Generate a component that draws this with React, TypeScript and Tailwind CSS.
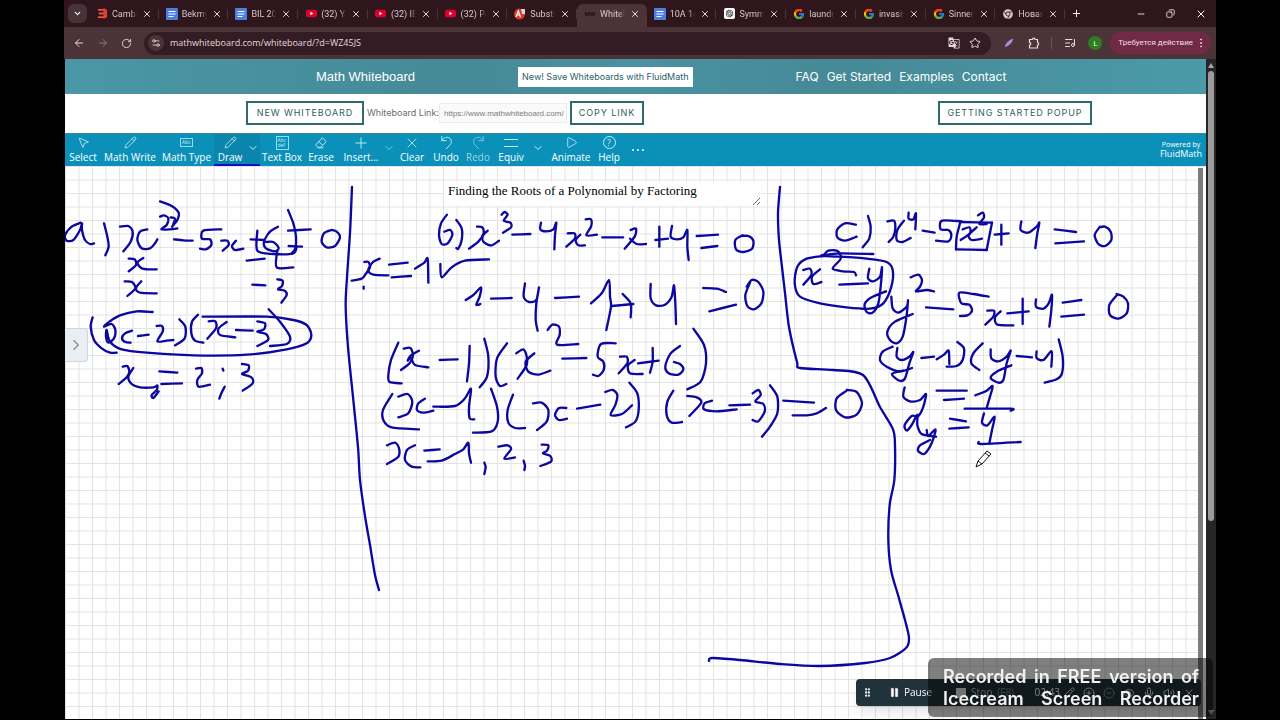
import type { ReactNode } from 'react';
import {
  ArrowLeft,
  ArrowRight,
  ChevronDown,
  ChevronRight,
  CirclePlus,
  CircleMinus,
  Copy,
  EllipsisVertical,
  Eye,
  GripVertical,
  ListMusic,
  Mic,
  Minus,
  MousePointer2,
  Pause,
  Pencil,
  Play,
  Plus,
  Puzzle,
  RotateCw,
  Settings2,
  Star,
  Volume2,
  X,
} from 'lucide-react';
import { FcGoogle } from 'react-icons/fc';
import { FaChrome } from 'react-icons/fa';
import { RiOpenaiFill } from 'react-icons/ri';
import { MdGTranslate } from 'react-icons/md';

const CambridgeIcon = () => (
  <svg viewBox="0 0 12 12" className="w-[11px] h-[11px]">
    <path d="M1 1h7v2H1zM2 5h6v2H2zM1 9h7v2H1z" fill="#f0503c" />
    <path d="M7 0l4 2v8l-4 2z" fill="#d8432f" />
  </svg>
);

const DocsIcon = () => (
  <svg viewBox="0 0 12 12" className="w-3 h-3">
    <rect width="12" height="12" rx="1" fill="#4a7fe0" />
    <path d="M2.5 3.5h7M2.5 6h7M2.5 8.5h5" stroke="#fff" strokeWidth="1.2" />
  </svg>
);

const YoutubeIcon = () => (
  <svg viewBox="0 0 12 12" className="w-[11px] h-[11px]">
    <rect y="2" width="12" height="8" rx="2" fill="#e0002d" />
    <path d="M4.8 4.2v3.6L8 6z" fill="#fff" />
  </svg>
);

const SubstIcon = () => (
  <svg viewBox="0 0 12 12" className="w-3 h-3">
    <circle cx="5.5" cy="6" r="5.5" fill="#d93a25" />
    <path d="M2 9l2.3-6 2.2 6M3 7h2.700" stroke="#fff" strokeWidth="1.2" fill="none" />
    <path d="M7 1h4v5H8z" fill="#d8d4d0" />
  </svg>
);

const ChatIcon = () => (
  <span className="w-[11px] h-[11px] rounded-xs bg-white flex items-center justify-center">
    <RiOpenaiFill size={9} className="text-black" />
  </span>
);

const tabs: { title: string; icon: ReactNode; active?: boolean }[] = [
  { title: 'Cambridge', icon: <CambridgeIcon /> },
  { title: 'Bekmyrza', icon: <DocsIcon /> },
  { title: 'BIL 2025', icon: <DocsIcon /> },
  { title: '(32) You', icon: <YoutubeIcon /> },
  { title: '(32) IELTS', icon: <YoutubeIcon /> },
  { title: '(32) Poly', icon: <YoutubeIcon /> },
  { title: 'Substitute', icon: <SubstIcon /> },
  { title: 'Whiteboard', icon: <span className="text-[6px] font-bold text-[#1d1013]">MW</span>, active: true },
  { title: '10A 14', icon: <DocsIcon /> },
  { title: 'Symmetry', icon: <ChatIcon /> },
  { title: 'laundry', icon: <FcGoogle size={12} /> },
  { title: 'invasive', icon: <FcGoogle size={12} /> },
  { title: 'Sinners', icon: <FcGoogle size={12} /> },
  { title: 'Новая вкладка', icon: <FaChrome size={10} /> },
];

const TabStrip = () => (
  <div className="flex items-center h-[27px] bg-[#2e161c] text-[#d6c8cb] font-[Roboto,sans-serif]">
    <button aria-label="Search tabs" className="ml-1 w-[19px] h-[19px] rounded-md bg-[#48333a] flex items-center justify-center text-white">
      <ChevronDown size={9} strokeWidth={3} />
    </button>
    <div className="ml-[2px] w-[976px] h-full flex items-end">
      {tabs.map((tab, index) => (
        <div
          key={index}
          className={`flex-1 min-w-0 h-[23px] pl-[7px] pb-1 flex items-center rounded-t-md ${tab.active ? 'bg-[#4c3338]' : ''}`}
        >
          <span className="w-3 flex justify-center shrink-0">{tab.icon}</span>
          <span className="ml-1 w-[25px] overflow-hidden whitespace-nowrap text-[9px] leading-4 [mask-image:linear-gradient(to_right,black_75%,transparent)]">
            {tab.title}
          </span>
          <button aria-label={`Close ${tab.title}`} className="ml-[5px] text-white">
            <X size={10} strokeWidth={2} />
          </button>
          {!tab.active && <span className="ml-auto w-px h-[10px] bg-[#4c3338]" />}
        </div>
      ))}
    </div>
    <button aria-label="New tab" className="ml-[6px] text-white"><Plus size={11} /></button>
    <div className="ml-auto mr-[9px] flex items-center gap-5 text-white">
      <button aria-label="Minimize"><Minus size={10} /></button>
      <button aria-label="Restore"><Copy size={9} className="-scale-x-100" /></button>
      <button aria-label="Close window"><X size={12} /></button>
    </div>
  </div>
);

const AddressBar = () => (
  <div className="flex items-center h-[32px] px-[9px] bg-[#4c3338] text-[#e6dadc]">
    <button aria-label="Back"><ArrowLeft size={12} /></button>
    <button aria-label="Forward" className="ml-3 text-[#8d777c]"><ArrowRight size={12} /></button>
    <button aria-label="Reload" className="ml-3"><RotateCw size={11} /></button>
    <div className="ml-3 flex-1 h-[23px] rounded-full bg-[#331c23] flex items-center pl-1 pr-[10px]">
      <span className="w-4 h-4 rounded-full bg-[#4c3338] flex items-center justify-center">
        <Settings2 size={10} />
      </span>
      <input
        aria-label="Address"
        defaultValue="mathwhiteboard.com/whiteboard/?d=WZ45JS"
        className="ml-[6px] flex-1 bg-transparent text-[9px] outline-none"
      />
      <MdGTranslate size={12} />
      <Star size={12} className="ml-[9px]" />
    </div>
    <svg viewBox="0 0 12 12" className="ml-[13px] w-[10px] h-[10px]">
      <path d="M1 11C2 6 6 2 11 1 10 6 7 9 1 11z" fill="#a98be0" />
    </svg>
    <svg viewBox="0 0 12 12" className="ml-[14px] w-3 h-3" fill="none" stroke="currentColor" strokeWidth="1.2">
      <path d="M1.500 2.500h3a1.300 1.300 0 0 1 2.600 0h2.400v3a1.300 1.300 0 0 1 0 2.600v2.900h-8V8a1.300 1.300 0 0 0 0-2.600z" />
    </svg>
    <span className="ml-[11px] w-px h-3 bg-[#6c5459]" />
    <ListMusic size={12} className="ml-[12px]" />
    <span className="ml-3 w-[14px] h-[14px] rounded-full bg-[#2f7d20] text-white text-[8px] flex items-center justify-center">L</span>
    <button className="ml-2 -mr-1 h-[22px] pl-2 pr-1 rounded-full bg-[#702a45] text-[#f3dfe6] font-[Roboto,sans-serif] text-[8px] flex items-center gap-[2px] whitespace-nowrap">
      Требуется действие
      <EllipsisVertical size={12} />
    </button>
  </div>
);

const SiteHeader = () => (
  <header className="flex items-center justify-between h-[35px] pl-[22%] pr-[17.5%] bg-[linear-gradient(90deg,#4a97a5,#468997_35%,#4992a1_50%,#468997_68%,#4b9aa8)] text-white font-[Inter,sans-serif]">
    <a href="#home" className="font-['Liberation_Sans',sans-serif] text-[13px]">Math Whiteboard</a>
    <button className="h-5 w-[175px] bg-white text-[#2d6068] text-[9px] whitespace-nowrap">
      New! Save Whiteboards with FluidMath
    </button>
    <nav className="flex gap-2 text-[12px]">
      <a href="#faq">FAQ</a>
      <a href="#start">Get Started</a>
      <a href="#examples">Examples</a>
      <a href="#contact">Contact</a>
    </nav>
  </header>
);

const outlined = 'h-6 border-2 border-[#2d6b70] text-[#2d5f66] text-[9px] tracking-widest whitespace-nowrap';

const LinkBar = () => (
  <div className="flex items-center justify-between h-[39px] pb-px pl-[181px] pr-[10%] bg-white font-[Inter,sans-serif]">
    <div className="flex items-center gap-[3px]">
      <button className={`${outlined} w-[118px]`}>NEW WHITEBOARD</button>
      <label htmlFor="link" className="w-[69px] text-[9px] text-[#6b6b6b] whitespace-nowrap">Whiteboard Link:</label>
      <input
        id="link"
        readOnly
        value="https://www.mathwhiteboard.com/"
        className="w-32 h-5 pl-1 border border-[#ededed] bg-[#fafafa] font-['Liberation_Sans',sans-serif] text-[8px] text-[#7c7c7c]"
      />
      <button className={`${outlined} w-[74px]`}>COPY LINK</button>
    </div>
    <button className={`${outlined} w-[154px]`}>GETTING STARTED POPUP</button>
  </div>
);

const AbcIcon = ({ lines }: { lines: string[] }) => (
  <span className="min-w-[13px] border border-[#8fe0f4] text-[5px] leading-[5px] px-px py-px flex flex-col text-left">
    {lines.map((line) => (
      <span key={line}>{line}</span>
    ))}
  </span>
);

const Eraser = () => (
  <svg viewBox="0 0 16 16" className="w-[14px] h-[14px]" fill="none" stroke="currentColor">
    <path d="M9.500 2L14 6.500 7.500 13h-3L2 10.200 9.500 2zM5.500 6.500l4.500 4M4 13.500h7" />
  </svg>
);

const UndoIcon = ({ flip }: { flip?: boolean }) => (
  <svg viewBox="0 0 16 16" className={`w-[15px] h-[15px] ${flip ? '-scale-x-100' : ''}`} fill="none" stroke="currentColor">
    <path d="M3 1v5h5M3.200 5.800C5 2.500 9 1.500 11.500 3.500c2.500 2 2 5.500 0 7.300L7.500 15" />
  </svg>
);

const tools: { label?: string; width: string; icon: ReactNode; state?: 'active' | 'dim' }[] = [
  { label: 'Select', width: 'w-9', icon: <MousePointer2 size={13} strokeWidth={1.5} /> },
  { label: 'Math Write', width: 'w-[58px]', icon: <Pencil size={13} strokeWidth={1.5} /> },
  { label: 'Math Type', width: 'w-[55px]', icon: <AbcIcon lines={['Abc']} /> },
  { label: 'Draw', width: 'w-8', icon: <Pencil size={13} strokeWidth={1.5} />, state: 'active' },
  { width: 'w-[14px]', icon: <ChevronDown size={12} strokeWidth={2} />, state: 'active' },
  { label: 'Text Box', width: 'w-11', icon: <AbcIcon lines={['Abc', 'def']} /> },
  { label: 'Erase', width: 'w-[34px]', icon: <Eraser /> },
  { label: 'Insert...', width: 'w-[46px]', icon: <Plus size={18} strokeWidth={1.2} /> },
  { width: 'w-[10px]', icon: <ChevronDown size={12} strokeWidth={2} />, state: 'dim' },
  { label: 'Clear', width: 'w-9', icon: <X size={16} strokeWidth={1.2} /> },
  { label: 'Undo', width: 'w-8', icon: <UndoIcon /> },
  { label: 'Redo', width: 'w-8', icon: <UndoIcon flip />, state: 'dim' },
  {
    label: 'Equiv',
    width: 'w-[34px]',
    icon: (
      <svg viewBox="0 0 14 10" className="w-[14px] h-[10px]" stroke="currentColor">
        <path d="M0 1.500h14M0 8.500h14" />
      </svg>
    ),
  },
  { width: 'w-5', icon: <ChevronDown size={12} strokeWidth={2} /> },
  { label: 'Animate', width: 'w-[46px]', icon: <Play size={13} strokeWidth={1.5} /> },
  {
    label: 'Help',
    width: 'w-[30px]',
    icon: <span className="w-[13px] h-[13px] rounded-full border border-current text-[9px] leading-[11px]">?</span>,
  },
];

const Toolbar = () => (
  <div className="flex h-[33px] bg-[#0b91b9] border-t border-[#3a8896] text-[#c5f1fb]">
    {tools.map((tool, index) => (
      <button
        key={index}
        aria-label={tool.label ?? 'More options'}
        className={`${tool.width} shrink-0 flex flex-col items-center border-b-2 ${
          tool.state === 'active' ? 'bg-[#0a86ad] border-[#0a10d0]' : 'border-transparent'
        } ${tool.state === 'dim' ? 'opacity-60' : ''}`}
      >
        <span className={`flex items-center justify-center ${tool.label ? 'h-[17px]' : 'h-[28px]'}`}>{tool.icon}</span>
        {tool.label && <span className="text-[10px] leading-[12px] text-white whitespace-nowrap">{tool.label}</span>}
      </button>
    ))}
    <button aria-label="More tools" className="w-7 flex justify-center gap-[3px] pt-[15px]">
      <span className="w-[2px] h-[2px] rounded-full bg-white" />
      <span className="w-[2px] h-[2px] rounded-full bg-white" />
      <span className="w-[2px] h-[2px] rounded-full bg-white" />
    </button>
    <div className="ml-auto pr-1 pt-[6px] text-center text-white">
      <p className="text-[7px] leading-[9px]">Powered by</p>
      <p className="text-[9px] leading-[10px]">FluidMath</p>
    </div>
  </div>
);

// Pen strokes, one list of x,y points for each. The pen samples at three times the board's pixels.
const dividers = [
  '861,63 855,201 846,333 842,420 849,543 864,693 879,843 885,942 900,1050 915,1137 930,1227 942,1272',
  '2145,63 2139,141 2142,222 2151,303 2160,381 2172,483 2196,588 2205,606 2304,612 2394,627 2445,723 2484,790 2490,840 2488,942 2474,1017 2470,1122 2478,1212 2499,1287 2520,1362 2532,1416 2523,1446 2475,1476 2400,1491 2265,1500 2145,1494 2025,1482 1941,1476 1932,1485',
];

const partA = [
  '62,128 35,140 15,165 20,182 40,180 60,150 66,130 66,150 75,180 90,192 102,190',
  '132,130 142,170 146,200 136,226',
  '180,140 205,138 218,155 212,185 190,214',
  '262,148 240,155 232,180 245,205 270,205 285,190 292,178',
  '300,110 312,106 325,115 320,135 304,148 330,148 352,145',
  '300,64 335,78 356,98 352,120 336,140',
  '332,112 345,116 340,132',
  '342,178 370,181 398,182',
  '484,148 430,152 426,176 450,178 454,195 438,208 420,206',
  '484,182 502,182 506,195 488,212',
  '528,182 516,198 525,210 550,206',
  '572,178 612,180',
  '592,152 592,212 640,222 700,220 710,200',
  '654,140 630,155 612,185 618,205 645,214 656,204 640,186 618,186',
  '684,90 700,130 708,170 706,205 695,220',
  '684,152 752,148',
  '686,198 726,200',
  '815,150 792,160 785,185 800,202 825,198 840,172 830,155 815,150',
  '206,236 224,238 228,255 206,274',
  '250,234 232,248 245,265 262,268 290,268',
  '560,242 614,236',
  '652,212 650,262 700,262',
  '194,304 216,306 226,325 202,348',
  '244,304 228,324 240,338 290,340',
  '577,314 616,316',
  '652,298 668,302 666,318 654,328 674,332 680,345 664,368',
  '98,412 92,440 102,480 125,505 150,518 170,518',
  '278,396 230,394 180,406 148,425 132,440 155,432 166,450 162,475 145,488 138,470 140,450 150,485 185,508 260,518 400,526 560,524 680,508 740,490 754,465 740,435 700,420 620,410 428,410',
  '216,452 195,460 186,475 196,486 212,488',
  '234,468 266,464',
  '290,438 306,438 308,455 292,484 320,482 340,480',
  '358,418 376,440 374,475 345,496',
  '414,404 396,425 394,460 405,482 430,488',
  '446,424 466,424 468,445 442,476',
  '500,426 476,445 480,465 526,472',
  '528,450 578,452',
  '592,424 615,430 612,448 592,455 618,462 624,480 592,498',
  '626,388 660,425 690,470 680,492 630,498',
  '188,560 202,558 208,575 200,592 176,612',
  '220,564 205,590 215,612 240,622 280,622 292,616 290,630 275,645 280,654 296,634',
  '298,574 352,578',
  '304,612 366,610',
  '408,566 424,564 426,580 412,600 416,620 450,614',
  '488,566 490,572',
  '494,620 484,640 478,656',
  '546,552 566,556 564,572 546,582 574,592 578,610 548,632',
];

const partBLeft = [
  '306,104 288,130 282,165 290,192 308,190 322,165 316,150 298,155',
  '334,120 350,145 350,180 340,206 334,204',
  '396,140 412,142 416,160 400,185 372,206',
  '428,152 412,170 418,188 440,196 462,182',
  '470,104 478,96 488,104 476,122 496,128 498,142 474,158',
  '502,164 556,162',
  '588,128 586,148 604,154 625,148 634,128 630,165 628,208',
  '668,160 688,160 690,175 664,200',
  '706,164 692,180 700,196 720,196',
  '722,118 738,118 738,140 724,166 756,164',
  '772,172 834,172',
  '58,246 70,246 75,262 62,282 50,296 20,302',
  '104,236 84,246 70,270 85,284 130,286',
  '132,254 188,248',
  '140,292 198,288',
  '210,266 238,248 248,236 250,308',
  '286,252 290,292 320,262 360,242 432,238',
  '56,320 56,326',
  '362,360 385,345 408,322 404,350 394,374 406,372',
  '438,356 500,354',
  '540,310 536,350 552,366 574,360 582,322 574,370 572,420 578,452',
  '630,354 702,350',
  '738,370 770,340 792,300 795,350 798,380 784,450',
  '160,488 138,540 130,585 134,606 170,610',
  '176,506 196,504 204,525 195,548 168,570',
  '222,512 198,526 188,542 198,534 210,555 250,562',
  '284,540 338,538',
  '374,498 372,550 366,604',
  '418,476 430,530 426,590 404,622',
  '486,490 456,535 452,590 465,618 484,612',
  '514,520 534,508 544,525 545,555 518,596',
  '568,520 542,545 550,575 580,584 616,572',
  '608,450 622,434 642,440 644,465 636,494 700,492',
  '652,536 724,534',
  '812,490 768,492 758,530 775,545 776,570 760,588 744,584',
  '142,642 114,690 116,722 140,742 222,748',
  '160,650 188,642 202,665 190,700 160,712',
  '240,656 220,670 216,690 235,698 265,692',
  '265,680 330,678 360,655 378,626 372,680 374,715 388,718',
  '438,626 456,680 458,725 440,754 384,758',
  '504,644 488,690 490,728 510,744 540,744',
  '564,670 590,668 610,690 605,725 576,750',
  '664,684 642,684 630,705 642,720 666,716',
  '696,686 766,674',
  '126,796 150,788 162,805 160,830 126,852',
  '210,796 186,810 180,840 200,860 226,862',
  '238,812 284,808',
  '248,844 290,842 330,822 355,808 370,788 372,820 378,848',
  '418,848 422,862 418,882',
  '460,800 488,796 498,808 478,836 510,832',
  '536,842 540,858 538,870',
  '590,794 610,796 606,812 594,820 616,828 618,845 586,858',
];

const partBRight = [
  '92,150 108,146 104,170 74,206',
  '90,176 110,192 138,192',
  '166,180 204,176',
  '178,140 178,200',
  '216,138 212,170 230,178 250,172 262,150 262,200 266,240',
  '290,168 354,164',
  '304,204 352,198',
  '428,166 406,180 408,208 430,216 456,206 460,182 445,168 425,168',
  '36,378 100,372',
  '68,342 92,370 92,412',
  '152,312 152,355 168,376 195,374 215,350 222,316 226,370 228,432',
  '310,324 350,326 378,336',
  '328,394 408,374',
  '450,308 436,345 442,378 462,388 484,370 490,335 475,306 455,300 440,320',
  '60,530 80,530 82,550 56,580',
  '104,540 84,556 90,580 128,582',
  '114,550 176,542',
  '158,504 158,545 150,578',
  '240,498 212,520 196,558 206,580 235,584 250,568 240,552 222,546',
  '280,446 312,495 318,550 302,605 262,628',
  '16,636 38,630 52,645 46,675 32,705 66,702 96,676',
  '88,608 112,640 116,690 106,725 78,742',
  '220,632 202,665 200,705 215,728 246,726',
  '262,648 290,652 304,668 268,708',
  '336,662 314,670 312,688 350,694 410,688',
  '388,676 450,674',
  '458,640 475,630 482,645 466,664 490,672 494,695 475,724 458,720',
  '510,616 532,650 532,700 510,740 486,770',
  '550,662 642,668',
  '578,706 620,706 650,700 678,684',
  '740,632 710,655 708,690 735,712 770,704 786,670 770,636 740,630',
];

const partC = [
  '228,134 195,130 172,148 172,172 195,182 230,170',
  '264,108 272,140 268,175 248,202',
  '322,124 342,122 346,145 340,170 326,186',
  '372,122 352,150 350,180 368,186 392,174',
  '386,98 386,116 400,118 408,100 406,148',
  '428,152 464,158',
  '545,124 486,122 482,148 505,150 514,165 505,184 468,182',
  '540,130 530,170 528,208',
  '528,208 620,210',
  '620,210 636,128',
  '636,128 540,126',
  '548,148 568,142 570,160 542,180',
  '590,142 566,165 575,180 606,176',
  '594,106 608,98 612,112 598,132 620,132',
  '644,164 686,160',
  '664,134 664,194',
  '724,124 722,150 745,158 770,140 778,128 772,160 766,204',
  '824,148 888,156',
  '826,190 912,184',
  '960,140 944,165 955,192 975,198 994,180 992,155 975,140 958,142',
  '124,226 180,220 280,222',
  '132,224 145,212 170,212 182,226 180,240 158,266 190,274 222,276 228,286',
  '130,228 80,236 52,260 44,310 60,350 120,370 200,382 270,386 310,370 334,320 338,270 320,246 260,236 180,230 130,228',
  '70,270 90,266 94,285 70,314',
  '120,268 96,290 100,312 124,306',
  '178,314 264,310',
  '268,266 264,295 280,304 300,290 306,262 302,320 295,370 278,398 260,396 254,372 275,352 318,334',
  '334,350 338,385 355,398 380,380 384,362 378,420 368,470 350,490 330,480 322,455 345,425 398,402',
  '392,292 415,284 426,300 420,320 408,334 440,330 462,334',
  '438,382 520,388',
  '626,350 580,342 538,338 544,370 568,374 576,392 562,406 540,408',
  '622,392 642,392 640,410 616,434',
  '662,394 645,412 652,434 700,436',
  '682,400 746,394',
  '728,356 728,432',
  '768,358 768,380 790,386 806,370 816,344 814,390 808,440',
  '848,368 904,360',
  '844,410 912,404',
  '1010,346 988,375 990,405 1015,416 1040,400 1044,370 1030,350 1010,342',
  '338,500 308,515 300,540 320,560 360,574 396,564',
  '352,504 350,530 365,540 388,530 400,516 388,550 375,595 358,602 336,582 370,572',
  '424,534 462,530',
  '470,538 492,524 506,512 508,552',
  '532,486 552,505 548,540 530,558 500,560',
  '608,490 580,520 574,550 598,570',
  '632,508 634,535 655,544 680,530 692,512 680,550 670,600 655,608 632,594 650,575 694,556',
  '710,528 756,532',
  '770,514 770,534 790,540 815,514 814,560',
  '836,478 848,530 846,580 830,598 794,608',
  '374,622 370,650 390,664 420,660 438,642 430,680 415,708 395,708 374,735 380,752 395,735 412,704 412,735 425,762 468,770',
  '440,750 445,768 466,748 462,770 450,800 432,822 414,812 420,796 450,780',
  '470,632 560,632',
  '492,660 552,656',
  '586,646 620,632 638,618 630,650 620,684',
  '554,686 692,686 692,692',
  '510,716 558,724',
  '508,746 566,742',
  '612,700 606,728 622,736 644,710 636,750 628,790',
  '596,786 605,792 722,786',
];

// Catmull-Rom spline through every sampled point
const smooth = (stroke: string) => {
  const p = stroke.split(' ').map((pair) => pair.split(',').map(Number));
  let d = `M${p[0][0]} ${p[0][1]}`;
  for (let i = 0; i < p.length - 1; i++) {
    const a = p[i - 1] ?? p[i];
    const b = p[i];
    const c = p[i + 1];
    const e = p[i + 2] ?? c;
    d += `C${b[0] + (c[0] - a[0]) / 7} ${b[1] + (c[1] - a[1]) / 7} ${c[0] - (e[0] - b[0]) / 7} ${c[1] - (e[1] - b[1]) / 7} ${c[0]} ${c[1]}`;
  }
  return d;
};

const Ink = ({ x, y, strokes }: { x: number; y: number; strokes: string[] }) => (
  <g transform={`translate(${x} ${y}) scale(${1 / 3})`}>
    {strokes.map((stroke, index) => (
      <path key={index} d={smooth(stroke)} />
    ))}
  </g>
);

const Board = () => (
  <main className="relative flex-1 flex bg-white overflow-hidden">
    <svg
      role="img"
      aria-label="Handwritten solutions: a) x² − 5x + 6 = 0, b) x³ − 4x² − x + 4 = 0, c) x⁴ − 5x² + 4 = 0"
      className="absolute inset-0 w-full h-full"
    >
      <defs>
        <pattern id="grid" width="13.5" height="13.5" patternUnits="userSpaceOnUse">
          <path d="M0 0.500H13.500M0.500 0V13.500" stroke="#e3e3e3" fill="none" />
        </pattern>
      </defs>
      <rect width="100%" height="100%" fill="url(#grid)" />
      <g fill="none" stroke="#0b07a0" strokeWidth="7" strokeLinecap="round" strokeLinejoin="round">
        <Ink x={0} y={0} strokes={dividers} />
        <Ink x={-5} y={14} strokes={partA} />
        <Ink x={280} y={14} strokes={partBLeft} />
        <Ink x={535} y={14} strokes={partBRight} />
        <Ink x={715} y={14} strokes={partC} />
      </g>
      {/* pen cursor */}
      <path d="M911 301l2-6 9-10 4 3-9 10-6 3zM913 295l4 3M920 287l4 3" fill="#fff" stroke="#111" />
    </svg>

    <textarea
      aria-label="Board title"
      defaultValue="Finding the Roots of a Polynomial by Factoring"
      className="absolute left-[379px] top-4 w-[317px] h-6 px-1 py-px bg-white text-black font-['Liberation_Serif',serif] text-[13px] leading-4 overflow-hidden resize"
    />

    <button
      aria-label="Open panel"
      className="absolute left-0 top-[162px] w-[23px] h-[34px] bg-[#e9eef3] border border-l-0 border-[#cfd5db] rounded-r-sm flex items-center justify-center text-[#7e8790]"
    >
      <ChevronRight size={18} strokeWidth={1.5} />
    </button>

    <div className="relative ml-auto w-[8px] mt-[2px] border-r-[3px] border-white bg-[#7c7c7c]" />
  </main>
);

const RecorderBar = () => (
  <div className="fixed right-[79px] bottom-[14px] w-[345px] h-[27px] rounded-sm bg-[#20323a] shadow-lg flex items-center px-[6px] text-white text-[10px]">
    <GripVertical size={11} strokeWidth={3} />
    <button className="ml-4 flex items-center gap-[4px]">
      <Pause size={11} fill="currentColor" strokeWidth={1} />
      Pause
    </button>
    <button className="ml-[24px] flex items-center gap-[5px] text-[#b4bcbf]">
      <span className="w-[10px] h-[10px] bg-[#e4e4e4]" />
      Stop <span className="text-[#7c878b]">(F8)</span>
    </button>
    <span className="ml-[10px] w-9 text-right">02:43</span>
    <div className="ml-auto flex items-center gap-2 text-[#d5dcdf]">
      <Pencil size={12} />
      <CirclePlus size={12} />
      <CircleMinus size={12} className="opacity-50" />
      <Eye size={12} />
      <Mic size={12} />
      <Volume2 size={12} />
      <X size={12} />
    </div>
  </div>
);

const Watermark = () => (
  <div className="fixed right-[67px] bottom-[3px] w-[285px] h-[59px] rounded-md bg-black/50 pl-[15px] pr-[14px] pt-2 text-[#f1f1f1] font-[Inter,sans-serif] text-[18px] leading-[22px] font-semibold">
    <p className="flex justify-between whitespace-nowrap">
      <span>Recorded</span>
      <span>in</span>
      <span>FREE</span>
      <span>version</span>
      <span>of</span>
    </p>
    <p className="flex justify-between">
      <span>Icecream</span>
      <span>Screen</span>
      <span>Recorder</span>
    </p>
  </div>
);

export default function App() {
  return (
    <div className="h-screen pl-16 pr-16 pb-px bg-black font-['Open_Sans','Noto_Sans',sans-serif]">
      <div className="h-full flex flex-col">
        <TabStrip />
        <AddressBar />
        <div className="flex-1 min-h-0 flex">
          <div className="flex-1 min-w-0 flex flex-col pl-px">
            <SiteHeader />
            <LinkBar />
            <Toolbar />
            <Board />
          </div>
          <div className="w-[10px] bg-[#262626] flex flex-col items-center justify-between py-1">
            <span className="border-x-[3px] border-b-[5px] border-x-transparent border-b-[#a5a5a5]" />
            <span className="mt-[3px] mb-auto w-[6px] h-[69%] rounded-full bg-[#9c9c9c]" />
            <span className="border-x-[3px] border-t-[5px] border-x-transparent border-t-[#a5a5a5]" />
          </div>
        </div>
      </div>
      <RecorderBar />
      <Watermark />
    </div>
  );
}
